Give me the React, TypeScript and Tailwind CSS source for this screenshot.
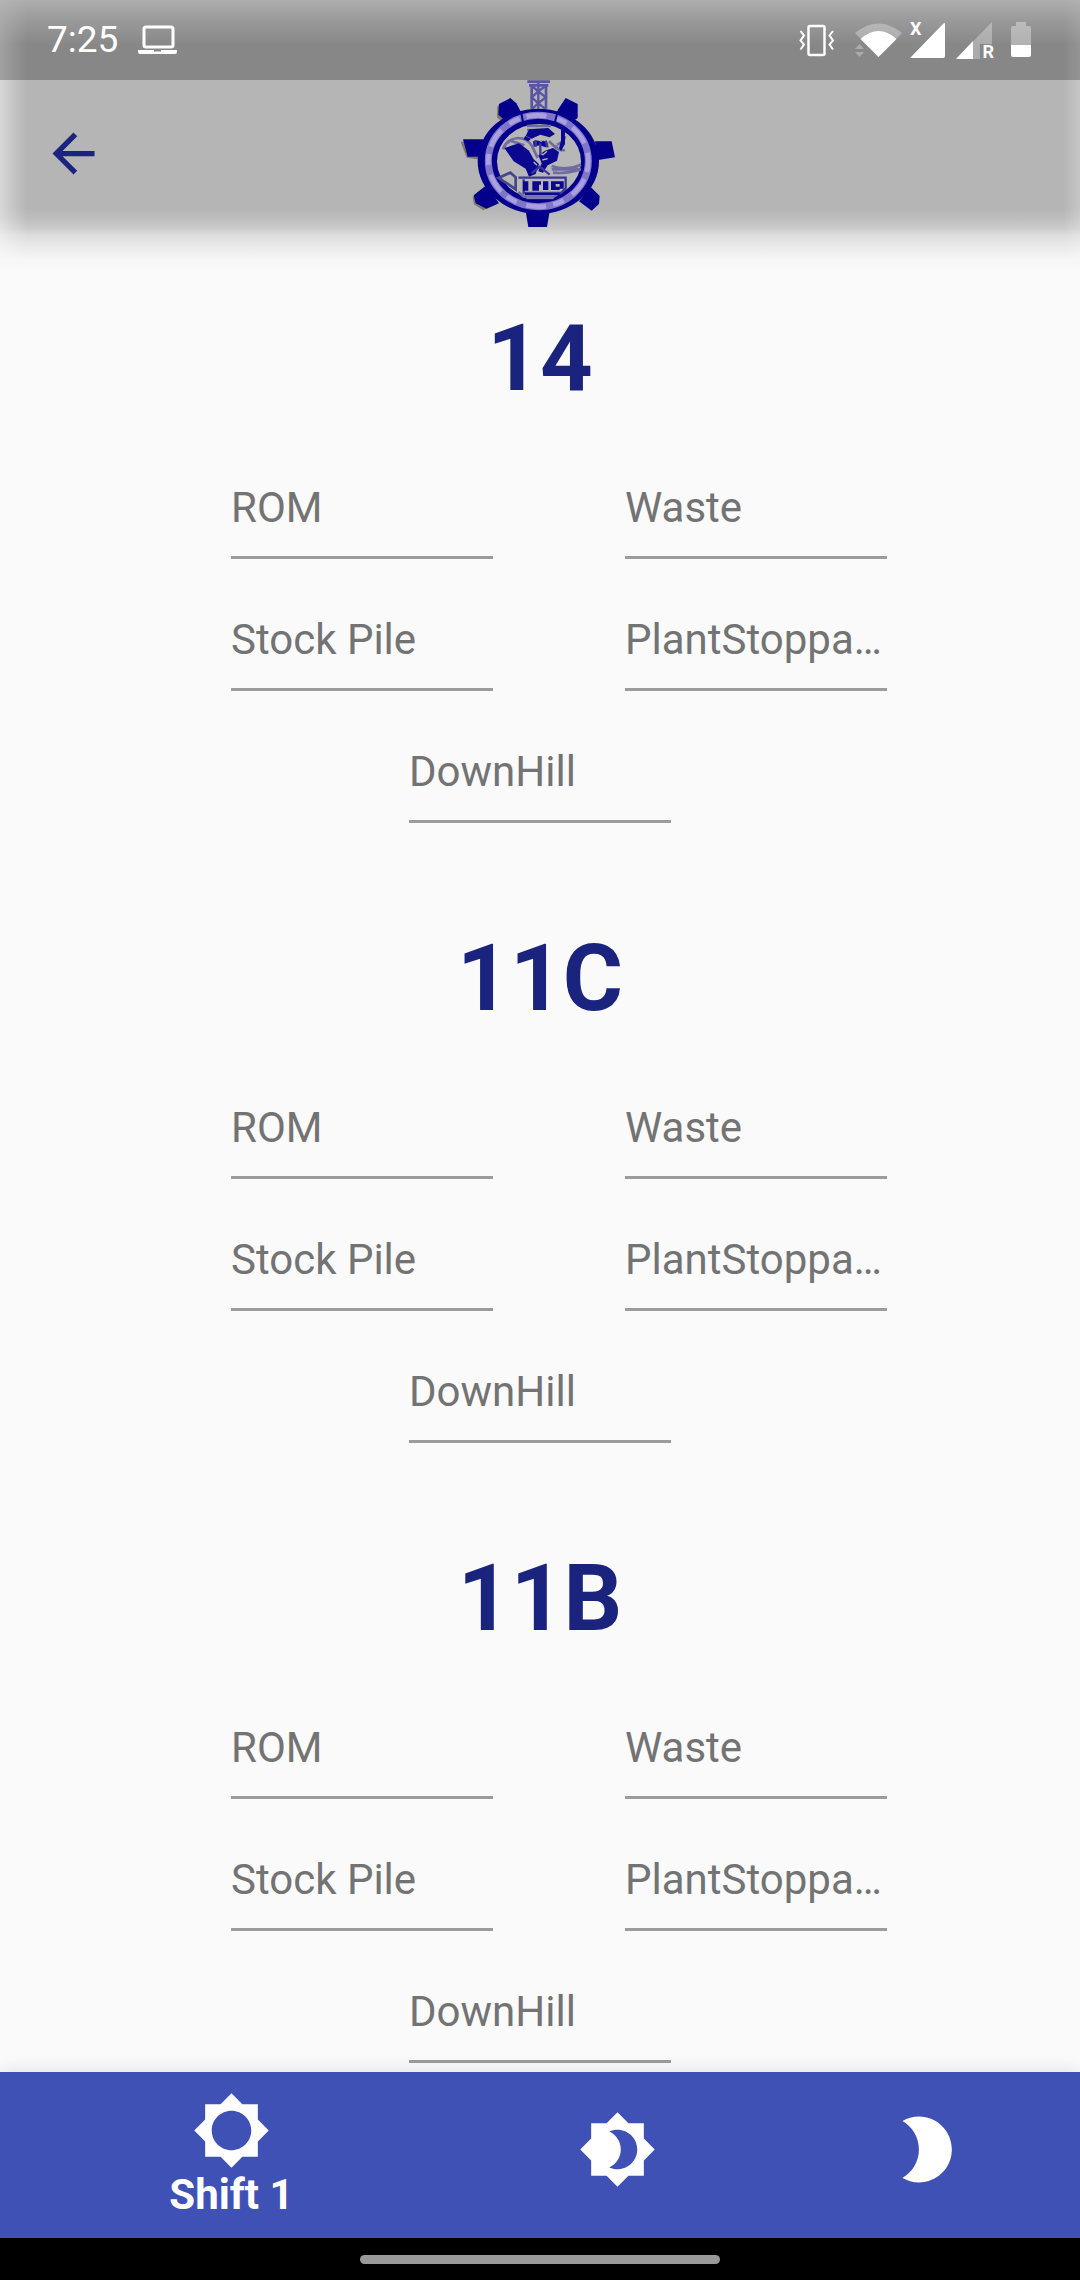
import React, { useState } from "react";
import {
  MdArrowBack,
  MdBrightness2,
  MdBrightness4,
  MdBrightness5,
} from "react-icons/md";

const SECTIONS = ["14", "11C", "11B"];
const FIELD_ROWS = [["ROM", "Waste"], ["Stock Pile", "PlantStoppage"]];

function LaptopIcon() {
  return (
    <svg viewBox="0 0 39 30" className="h-[30px] w-[39px]" aria-hidden="true">
      <rect x="6" y="2" width="29" height="20" rx="2" fill="none" stroke="white" strokeWidth="3" />
      <path d="M0 25h16v1.500h7V25h16v2q0 2-2 2H2q-2 0-2-2z" fill="white" />
    </svg>
  );
}

function VibrateIcon() {
  return (
    <svg viewBox="0 0 36 34" className="h-[34px] w-9" aria-hidden="true">
      <g fill="none" stroke="white">
        <rect x="9.500" y="3" width="16" height="29" rx="1.500" strokeWidth="2.500" />
        <path d="M1.500 8l3.500 4.500-3.500 5 3.500 4-3.500 5M34 8l-3.500 4.500 3.500 5-3.500 4 3.500 5" strokeWidth="2" />
      </g>
    </svg>
  );
}

function WifiIcon() {
  return (
    <svg viewBox="0 0 47 34" className="h-[34px] w-[47px]" aria-hidden="true">
      <path d="M0 10Q23.500-9 47 10L23.500 34z" fill="white" fillOpacity="0.3" />
      <path d="M5.500 16q18-16 36 0L23.500 34z" fill="white" />
      <path d="M0 26l4.500-5L9 26zM0 29h9l-4.500 5z" fill="white" fillOpacity="0.3" />
    </svg>
  );
}

function SignalNoDataIcon() {
  return (
    <div className="relative h-9 w-[35px]">
      <svg viewBox="0 0 35 36" className="h-9 w-[35px]" aria-hidden="true">
        <path d="M35 2v32q0 2-2 2H0L33 2q2-2 2 0z" fill="white" />
      </svg>
      <span className="absolute -top-1 left-0 text-[18px] leading-[22px] font-bold">X</span>
    </div>
  );
}

function SignalRoamingIcon() {
  return (
    <div className="relative h-[38px] w-[37px]">
      <svg viewBox="0 0 37 38" className="h-[38px] w-[37px]" aria-hidden="true">
        <path d="M36 1v22H24v15H0z" fill="white" fillOpacity="0.3" />
        <path d="M17 20v18H0z" fill="white" />
      </svg>
      <span className="absolute -right-px -bottom-1 text-[18px] leading-[22px] font-bold">R</span>
    </div>
  );
}

function BatteryIcon() {
  return (
    <svg viewBox="0 0 20 36" className="h-9 w-5" aria-hidden="true">
      <path d="M5 0h10v4h3q2 0 2 2v17H0V6q0-2 2-2h3z" fill="white" fillOpacity="0.35" />
      <path d="M0 23h20v10q0 2-2 2H2q-2 0-2-2z" fill="white" />
    </svg>
  );
}

function StatusBar() {
  return (
    <div className="relative flex h-20 items-center justify-between bg-black/25 pr-[49px] pl-[47px] text-white">
      <div className="flex items-center gap-5">
        <span className="text-[37px] leading-[44px]">7:25</span>
        <LaptopIcon />
      </div>
      <div className="flex items-center">
        <VibrateIcon />
        <span className="w-5" />
        <WifiIcon />
        <span className="w-2" />
        <SignalNoDataIcon />
        <span className="w-[11px]" />
        <SignalRoamingIcon />
        <span className="w-[18px]" />
        <BatteryIcon />
      </div>
    </div>
  );
}

/* Mine emblem: a toothed wheel on a chain with a pick-wielding figure inside. */
function Emblem() {
  return (
    <svg viewBox="0 6 510 441" className="h-[147px] w-[170px]" role="img" aria-label="Company emblem">
      <g fill="none" stroke="#5a55a0" strokeWidth="8">
        <path d="M217 11h68M222 22h58M230 24v68M273 24v68" />
        <path d="M230 24l20 16-20 18 20 18-18 16M272 24l-22 16 22 18-22 18 20 16M250 14v78" strokeWidth="7" />
      </g>
      <g fill="#7b7a62" transform="translate(-5 5)">
        <path d="M132 80l33-20 20 16 12 26-42 30-24-18z" />
        <path d="M22 186h60v54l-42-6z" />
        <path d="M58 352l34-28 38 50-40 18-28-18z" />
      </g>
      <g fill="#05008c">
        <path d="M132 78l34-18 18 16 14 26-40 32-28-24z" />
        <path d="M308 96l24-36 36 18v42l-26 18-36-24z" />
        <path d="M24 184l60 0-4 52-42 0z" />
        <path d="M420 190h50l10 48-50 8z" />
        <path d="M56 352l38-30 38 54-38 16-32-16z" />
        <path d="M372 370l36-42 26 26-2 24-22 20z" />
        <path d="M212 400h72l-8 47h-56z" />
      </g>
      <ellipse cx="250" cy="250" rx="182" ry="158" fill="#05008c" />
      <ellipse cx="250" cy="249" rx="150" ry="137" fill="none" stroke="#7f76c8" strokeWidth="21" />
      <ellipse
        cx="250"
        cy="249"
        rx="150"
        ry="137"
        fill="none"
        stroke="#aaa0e0"
        strokeWidth="14"
        strokeDasharray="34 22 60 30"
      />
      <g stroke="#05008c" strokeWidth="6">
        <path d="M198 100l6 32M308 100l-8 32" />
      </g>
      <ellipse cx="252" cy="250" rx="126" ry="112" fill="#b7b7b7" />
      <g fill="none" stroke="#6f6c9f" strokeWidth="8">
        <path d="M144 214q10-30 44-34 30 0 44 26l16 34M150 200l16-12 42 14" />
        <path d="M290 264q44 16 88-4M294 284q46 4 84-10M290 274h84" />
        <path d="M306 200q22-8 24-26M330 216q-20 4-30-14M282 190l24 22" />
        <path d="M130 300l36-16 16 14v36l-20-14z" stroke="#46458c" />
        <path d="M216 144h72M216 156h66" />
        <path d="M190 342l16 14h90l18-12" />
      </g>
      <g fill="#0b0790">
        <path d="M148 210l44-14 30 22 14 26 16 14-10 30-20 8-10-24-36-22z" />
        <path d="M222 154l58-4 20 18-16 10-28-8-26 12-18-8z" />
        <path d="M210 174l18 8-8 8-14-6zM318 150l12 8v40l-12 22-6-10 6-22z" />
        <path d="M250 232l20-14 24-8 18 12-6 26-28 14-14 22-14-4 10-24z" />
        <path d="M234 190l30-4 16 12-8 10-18-6-18 4z" />
      </g>
      <g fill="none" stroke="#b7b7b7" strokeWidth="4">
        <path d="M240 178l18 12 20-10M250 206v18l14 6 12-10M262 246l16-4M236 252l10 10" />
      </g>
      <g fill="none" stroke="#3c3895" strokeWidth="7">
        <path d="M242 186v20M272 188l6 20M256 196v34M230 286l24-20 30 24" />
        <path d="M190 299h142v32l-14 14H206V304" />
      </g>
      <g fill="#0b0790">
        <path d="M204 310h16v28h-16zM232 310h26v10h-6v18h-20zM264 310h16v26h-16zM288 310h38v22h-12v4h-26z" />
        <path d="M210 345h104v6H210z" />
      </g>
      <path d="M302 318h12v8h-12z" fill="#b7b7b7" />
      <path d="M214 360h82" stroke="#7c79b0" strokeWidth="7" />
    </svg>
  );
}

function Header() {
  return (
    <header className="relative">
      <div className="pointer-events-none absolute inset-x-0 top-0 -bottom-[46px] bg-[linear-gradient(to_right,rgba(250,250,250,0.5),rgba(250,250,250,0.28)_11px,transparent_27px),linear-gradient(to_left,rgba(250,250,250,0.25),transparent_16px),linear-gradient(to_bottom,#e8e8e8,#cecece_20px,#b5b5b5_45px,#b5b5b5_208px,#bdbdbd_218px,#cbcbcb_228px,#dcdcdc_235px,#ebebeb_248px,#f6f6f6_260px,#fafafa_273px)]" />
      <StatusBar />
      <div className="relative flex h-[147px] items-center justify-center">
        <button type="button" aria-label="Back" className="absolute left-[42px] text-[#1a237e]">
          <MdArrowBack className="size-[63px]" />
        </button>
        <Emblem />
      </div>
    </header>
  );
}

function Field({ section, name }: { section: string; name: string }) {
  return (
    <input
      type="text"
      aria-label={`${name}, ${section}`}
      placeholder={name}
      className="block w-[262px] border-b-[3px] border-[#9c9c9c] bg-transparent pt-8 pb-6 text-[42px] leading-[49px] text-ellipsis text-black outline-none placeholder:text-[#737373] placeholder:opacity-100"
    />
  );
}

function Section({ name }: { name: string }) {
  return (
    <section className="flex flex-col items-center">
      <h2 className="text-[92px] leading-[108px] font-bold text-[#1a237e]">{name}</h2>
      <div className="mt-[38px] flex flex-col items-center gap-6">
        {FIELD_ROWS.map((row) => (
          <div key={row[0]} className="flex gap-[132px] pl-[38px]">
            {row.map((label) => (
              <Field key={label} section={name} name={label} />
            ))}
          </div>
        ))}
        <Field section={name} name="DownHill" />
      </div>
    </section>
  );
}

const SHIFTS = [
  { label: "Shift 1", Icon: MdBrightness5 },
  { label: "Shift 2", Icon: MdBrightness4 },
  { label: "Shift 3", Icon: MdBrightness2 },
];

function BottomNav() {
  const [active, setActive] = useState(0);
  return (
    <nav className="relative flex h-[166px] bg-[#3f51b5] text-white shadow-[0_-4px_14px_rgba(0,0,0,0.08)]">
      {SHIFTS.map(({ label, Icon }, i) => (
        <button
          key={label}
          type="button"
          aria-label={label}
          aria-pressed={i === active}
          onClick={() => setActive(i)}
          className={
            i === active
              ? "flex flex-[3] flex-col items-center justify-center"
              : "flex flex-[2] flex-col items-center justify-center pb-3"
          }
        >
          <Icon className="size-[79px]" />
          {i === active && <span className="text-[42px] leading-[49px] font-bold">{label}</span>}
        </button>
      ))}
    </nav>
  );
}

export default function App() {
  return (
    <div className="flex min-h-screen flex-col bg-[#fafafa] font-['Roboto',sans-serif]">
      <Header />
      <main className="flex flex-1 flex-col gap-[102px] pt-[78px] pb-2">
        {SECTIONS.map((name) => (
          <Section key={name} name={name} />
        ))}
      </main>
      <BottomNav />
      <div className="flex h-[42px] items-center justify-center bg-black">
        <div className="h-[9px] w-1/3 rounded-full bg-[#999999]" />
      </div>
    </div>
  );
}
